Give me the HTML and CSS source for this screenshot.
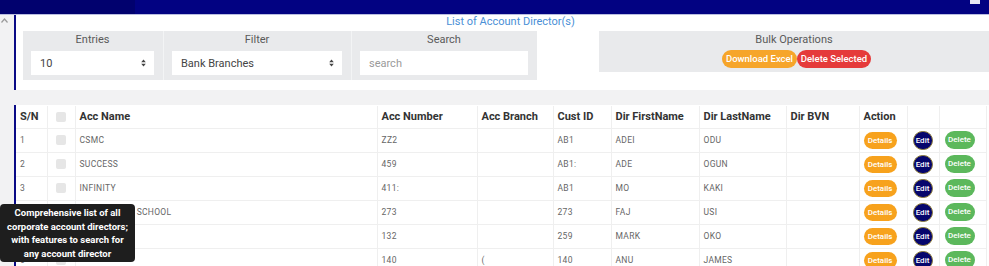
FILE: index.html
```html
<!DOCTYPE html>
<html lang="en">
<head>
<meta charset="utf-8">
<title>List of Account Director(s)</title>
<link rel="stylesheet" href="styles.css">
</head>
<body>
<header class="topbar">
  <div class="brand"></div>
  <div class="navfill"></div>
  <span class="navicon"></span>
</header>
<div class="layout">
  <aside class="gutter">
    <svg class="caret" width="7" height="5" viewBox="0 0 7 5"><path d="M0.5 4.5 L3.5 1 L6.5 4.5" fill="none" stroke="#9a9a9a" stroke-width="1.2"/></svg>
  </aside>
  <main class="main">
    <section class="card head-card">
      <h1 class="title">List of Account Director(s)</h1>
      <div class="controls">
        <div class="panel filters">
          <div class="cell">
            <div class="label">Entries</div>
            <div class="field select"><span>10</span>
              <svg class="arrows" width="5" height="8" viewBox="0 0 5 8"><path d="M2.5 0.5 L4.8 3.2 H0.2 Z M2.5 7.5 L4.8 4.8 H0.2 Z" fill="#444"/></svg>
            </div>
          </div>
          <div class="cell">
            <div class="label">Filter</div>
            <div class="field select"><span>Bank Branches</span>
              <svg class="arrows" width="5" height="8" viewBox="0 0 5 8"><path d="M2.5 0.5 L4.8 3.2 H0.2 Z M2.5 7.5 L4.8 4.8 H0.2 Z" fill="#444"/></svg>
            </div>
          </div>
          <div class="cell">
            <div class="label">Search</div>
            <div class="field"><span class="placeholder">search</span></div>
          </div>
        </div>
        <div class="panel bulk">
          <div class="label">Bulk Operations</div>
          <div class="bulk-buttons">
            <span class="pill orange">Download Excel</span><span class="pill red">Delete Selected</span>
          </div>
        </div>
      </div>
    </section>
    <section class="card table-card">
      <table class="grid">
        <colgroup>
          <col class="c-sn"><col class="c-chk"><col class="c-name"><col class="c-num"><col class="c-branch"><col class="c-cust"><col class="c-first"><col class="c-last"><col class="c-bvn"><col class="c-act"><col class="c-edit"><col class="c-del">
        </colgroup>
        <thead>
          <tr><th>S/N</th><th><span class="chk"></span></th><th>Acc Name</th><th>Acc Number</th><th>Acc Branch</th><th>Cust ID</th><th>Dir FirstName</th><th>Dir LastName</th><th>Dir BVN</th><th>Action</th><th></th><th></th></tr>
        </thead>
        <tbody>
          <tr><td>1</td><td><span class="chk"></span></td><td>CSMC</td><td>ZZ2</td><td></td><td>AB1</td><td>ADEI</td><td>ODU</td><td></td><td><span class="btn details">Details</span></td><td><span class="btn edit">Edit</span></td><td><span class="btn delete">Delete</span></td></tr>
          <tr><td>2</td><td><span class="chk"></span></td><td>SUCCESS</td><td>459</td><td></td><td>AB1:</td><td>ADE</td><td>OGUN</td><td></td><td><span class="btn details">Details</span></td><td><span class="btn edit">Edit</span></td><td><span class="btn delete">Delete</span></td></tr>
          <tr><td>3</td><td><span class="chk"></span></td><td>INFINITY</td><td>411:</td><td></td><td>AB1</td><td>MO</td><td>KAKI</td><td></td><td><span class="btn details">Details</span></td><td><span class="btn edit">Edit</span></td><td><span class="btn delete">Delete</span></td></tr>
          <tr><td>4</td><td><span class="chk"></span></td><td>GREEN HILLS SCHOOL</td><td>273</td><td></td><td>273</td><td>FAJ</td><td>USI</td><td></td><td><span class="btn details">Details</span></td><td><span class="btn edit">Edit</span></td><td><span class="btn delete">Delete</span></td></tr>
          <tr><td>5</td><td><span class="chk"></span></td><td></td><td>132</td><td></td><td>259</td><td>MARK</td><td>OKO</td><td></td><td><span class="btn details">Details</span></td><td><span class="btn edit">Edit</span></td><td><span class="btn delete">Delete</span></td></tr>
          <tr><td>6</td><td><span class="chk"></span></td><td></td><td>140</td><td>(</td><td>140</td><td>ANU</td><td>JAMES</td><td></td><td><span class="btn details">Details</span></td><td><span class="btn edit">Edit</span></td><td><span class="btn delete">Delete</span></td></tr>
        </tbody>
      </table>
    </section>
  </main>
</div>
<div class="tooltip">Comprehensive list of all<br>corporate account directors;<br>with features to search for<br>any account director</div>
</body>
</html>
```
FILE: styles.css
```css
* { box-sizing: border-box; }
html, body { margin: 0; padding: 0; }
body {
  width: 989px;
  height: 266px;
  overflow: hidden;
  background: #f2f2f3;
  font-family: Roboto, "Liberation Sans", sans-serif;
  color: #333;
  position: relative;
}
.topbar {
  height: 15px;
  display: flex;
  background: #020282;
  border-bottom: 1px solid #b9bde0;
  position: relative;
}
.brand { width: 135px; background: #01016e; }
.navfill { flex: 1; }
.navicon {
  position: absolute;
  left: 970px;
  top: 0;
  width: 10px;
  height: 4px;
  background: #e8e8f4;
}
.layout { display: flex; }
.gutter { width: 14px; flex: none; padding: 3px 0 0 1px; }
.caret { display: block; }
.main { flex: 1; display: flex; flex-direction: column; gap: 15px; }
.card {
  background: #fff;
  border-left: 2px solid #0a0a86;
}
.head-card { height: 75px; }
.title {
  margin: 0 0 2px;
  height: 14px;
  font-size: 11px;
  line-height: 14px;
  font-weight: 400;
  color: #4a8fd6;
  text-align: center;
  padding-left: 16px;
}
.controls { display: flex; padding-left: 7px; align-items: flex-start; }
.panel { background: #e9eaec; }
.filters { display: flex; width: 514px; height: 49px; }
.cell { padding: 1px 9px 0 8px; }
.cell:nth-child(1) { width: 140px; }
.cell:nth-child(2) { width: 188px; border-left: 1px solid #f3f4f5; }
.cell:nth-child(3) { width: 186px; border-left: 1px solid #f3f4f5; }
.label {
  height: 16px;
  line-height: 16px;
  font-size: 11px;
  color: #5a5a5a;
  text-align: center;
}
.field {
  margin-top: 3px;
  height: 24px;
  background: #fff;
  display: flex;
  align-items: center;
  justify-content: space-between;
  padding: 0 8px 0 9px;
  font-size: 11px;
  color: #444;
}
.placeholder { color: #9a9a9a; }
.arrows { display: block; }
.bulk { margin-left: 62px; flex: 1; height: 41px; padding-top: 1px; }
.bulk-buttons { display: flex; justify-content: center; margin-top: 2px; padding-left: 5px; }
.pill {
  height: 18px;
  line-height: 18px;
  border-radius: 9px;
  color: #fff;
  font-size: 9.5px;
  font-weight: 500;
  white-space: nowrap;
  text-align: center;
}
.orange { background: #f6a52a; width: 75px; }
.red { background: #e53a3a; width: 74px; }
.table-card { flex: 1; padding-top: 1px; }
.grid {
  border-collapse: collapse;
  table-layout: fixed;
  width: 970px;
}
.c-sn { width: 31px; }
.c-chk { width: 28px; }
.c-name { width: 302px; }
.c-num { width: 100px; }
.c-branch { width: 76px; }
.c-cust { width: 58px; }
.c-first { width: 88px; }
.c-last { width: 87px; }
.c-bvn { width: 73px; }
.c-act { width: 48px; }
.c-edit { width: 32px; }
.c-del { width: 47px; }
.grid th, .grid td {
  border: 1px solid #efefef;
  padding: 0 0 0 4px;
  text-align: left;
  white-space: nowrap;
  overflow: hidden;
}
.grid tr > :first-child { border-left: 0; }
.grid th {
  height: 22px;
  font-size: 11px;
  font-weight: 700;
  color: #333;
  border-top: 0;
}
.grid td {
  height: 24px;
  font-size: 8.5px;
  color: #666;
  letter-spacing: 0.3px;
}
.chk {
  display: block;
  width: 10px;
  height: 10px;
  margin-left: 4px;
  border-radius: 2px;
  background: #e6e6e6;
}
.btn {
  display: inline-block;
  height: 17px;
  line-height: 17px;
  color: #fff;
  font-size: 8px;
  font-weight: 500;
  letter-spacing: 0;
  text-align: center;
  vertical-align: middle;
}
.details { width: 33px; border-radius: 9px; background: #f7a21d; }
.edit {
  width: 20px;
  height: 19px;
  line-height: 17px;
  border-radius: 10px;
  background: #06066d;
  border: 1px solid #8a7a3a;
  margin-left: 1px;
}
.delete { width: 30px; height: 18px; line-height: 18px; border-radius: 9px; background: #5cb85c; margin-left: 1px; }
.tooltip {
  position: absolute;
  left: 0;
  top: 204px;
  width: 135px;
  height: 58px;
  padding-top: 2px;
  background: #1e1e1e;
  border-radius: 4px;
  color: #fff;
  font-size: 9.5px;
  font-weight: 700;
  line-height: 13.7px;
  text-align: center;
}
```
